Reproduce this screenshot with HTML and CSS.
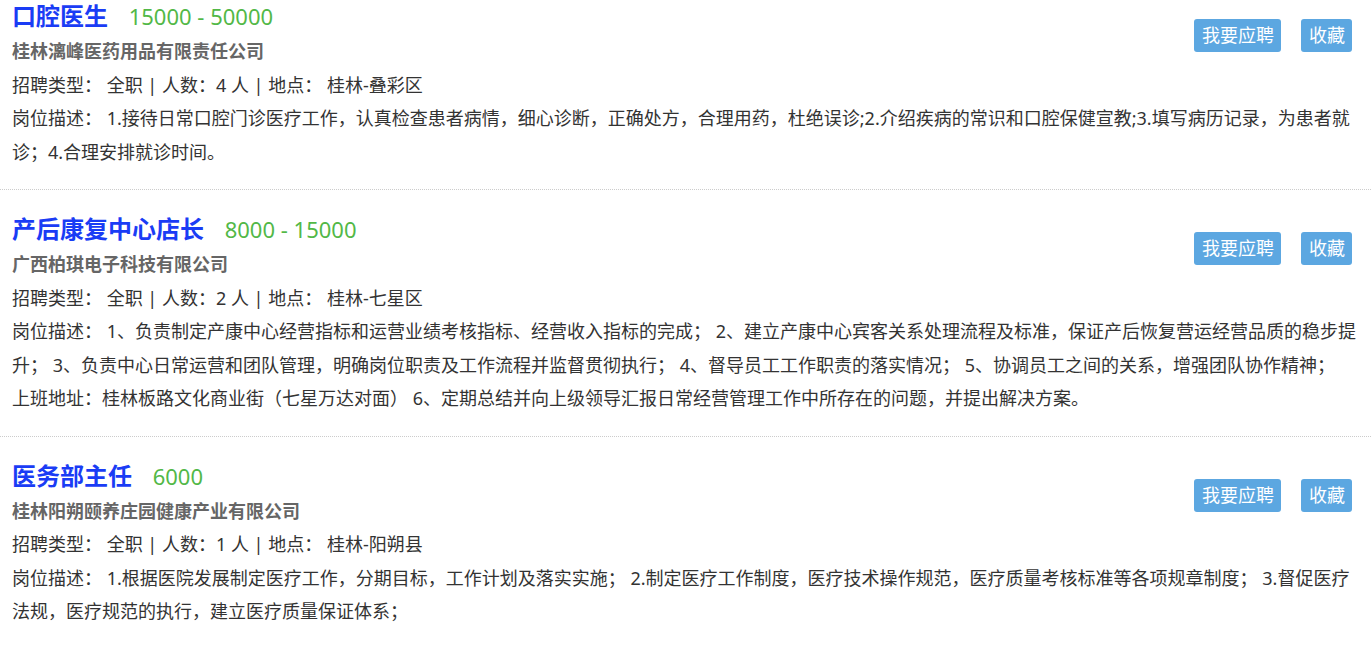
FILE: index.html
```html
<!DOCTYPE html>
<html>
<head>
    <meta charset="utf-8">
    <title>招聘信息</title>
    <link rel="stylesheet" href="styles.css">
</head>
<body>
    <div class="job-list">
        <div class="job">
            <div class="actions">
                <button type="button" class="btn">我要应聘</button>
                <button type="button" class="btn">收藏</button>
            </div>
            <div class="job-head">
                <span class="job-title">口腔医生</span>
                <span class="salary">15000 - 50000</span>
            </div>
            <p class="company">桂林漓峰医药用品有限责任公司</p>
            <p class="info">招聘类型： 全职 | 人数：4 人 | 地点： 桂林-叠彩区</p>
            <p class="desc">岗位描述： 1.接待日常口腔门诊医疗工作，认真检查患者病情，细心诊断，正确处方，合理用药，杜绝误诊;2.介绍疾病的常识和口腔保健宣教;3.填写病历记录，为患者就诊；4.合理安排就诊时间。</p>
        </div>
        <div class="job">
            <div class="actions">
                <button type="button" class="btn">我要应聘</button>
                <button type="button" class="btn">收藏</button>
            </div>
            <div class="job-head">
                <span class="job-title">产后康复中心店长</span>
                <span class="salary">8000 - 15000</span>
            </div>
            <p class="company">广西柏琪电子科技有限公司</p>
            <p class="info">招聘类型： 全职 | 人数：2 人 | 地点： 桂林-七星区</p>
            <p class="desc">岗位描述： 1、负责制定产康中心经营指标和运营业绩考核指标、经营收入指标的完成； 2、建立产康中心宾客关系处理流程及标准，保证产后恢复营运经营品质的稳步提升； 3、负责中心日常运营和团队管理，明确岗位职责及工作流程并监督贯彻执行； 4、督导员工工作职责的落实情况； 5、协调员工之间的关系，增强团队协作精神；<br>上班地址：桂林板路文化商业街（七星万达对面） 6、定期总结并向上级领导汇报日常经营管理工作中所存在的问题，并提出解决方案。</p>
        </div>
        <div class="job">
            <div class="actions">
                <button type="button" class="btn">我要应聘</button>
                <button type="button" class="btn">收藏</button>
            </div>
            <div class="job-head">
                <span class="job-title">医务部主任</span>
                <span class="salary">6000</span>
            </div>
            <p class="company">桂林阳朔颐养庄园健康产业有限公司</p>
            <p class="info">招聘类型： 全职 | 人数：1 人 | 地点： 桂林-阳朔县</p>
            <p class="desc">岗位描述： 1.根据医院发展制定医疗工作，分期目标，工作计划及落实实施； 2.制定医疗工作制度，医疗技术操作规范，医疗质量考核标准等各项规章制度； 3.督促医疗法规，医疗规范的执行，建立医疗质量保证体系；</p>
        </div>
    </div>
</body>
</html>
```

FILE: styles.css
```css
body {
    margin: 0;
    font-family: "Noto Sans", "Noto Sans CJK SC", sans-serif;
    font-size: 18px;
    color: #333;
    background: #fff;
}
.job-list {
    margin-top: -1px;
}
.job {
    padding: 22px 12px 20px;
    border-bottom: 1px dotted #ccc;
}
.job:first-child {
    padding-top: 0;
}
.job p {
    margin: 0;
    line-height: 33.5px;
}
.job-head {
    line-height: 34px;
}
.job-title {
    font-size: 24px;
    font-weight: bold;
    color: #1a3cf5;
}
.salary {
    font-size: 22px;
    color: #52b847;
    margin-left: 16px;
}
.company {
    font-weight: bold;
    color: #666;
}
.actions {
    float: right;
    margin-top: 20px;
    margin-right: 7px;
    display: flex;
    gap: 20px;
}
.btn {
    font-family: inherit;
    font-size: 18px;
    line-height: 33px;
    height: 33px;
    padding: 0 7px 0 8px;
    border: none;
    border-radius: 3px;
    background: #5ca7e1;
    color: #fff;
    cursor: pointer;
}
```
